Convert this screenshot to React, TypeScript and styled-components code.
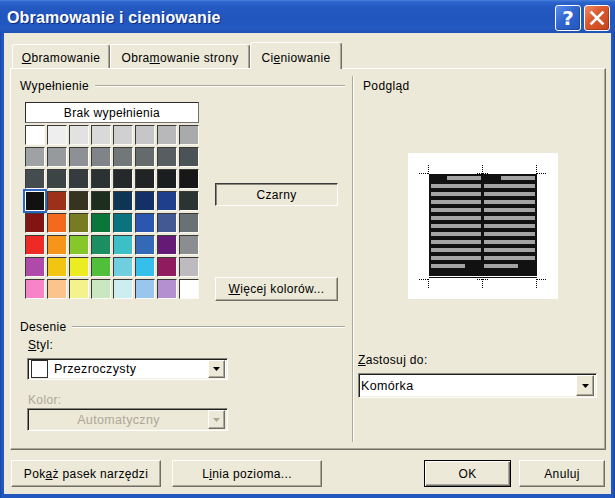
import React from "react";
import styled, { createGlobalStyle, css } from "styled-components";

const Global = createGlobalStyle`
  html, body { margin: 0; padding: 0; background: #fff; }
  body { font-family: "Liberation Sans", Arial, sans-serif; font-size: 12px; color: #000; }
  #root { width: 615px; height: 498px; }
  u { text-decoration: underline; text-underline-offset: 1px; }
`;

const raised = css`
  border: 1px solid;
  border-color: #fff #716f64 #716f64 #fff;
  box-shadow: inset -1px -1px #aca899;
  background: #ece9d8;
`;

const sunken = css`
  border: 1px solid;
  border-color: #8a887c #fff #fff #8a887c;
  box-shadow: inset 1px 1px #1e1e1e, inset -1px -1px #f1efe2;
`;

const Window = styled.div`
  width: 615px;
  height: 498px;
  box-sizing: border-box;
  display: flex;
  flex-direction: column;
  background: linear-gradient(90deg, #1a48a8 0, #2257bf 2px, #2257bf calc(100% - 2px), #163f98 100%);
`;

const TitleBar = styled.div`
  height: 33px;
  flex: none;
  box-sizing: border-box;
  display: flex;
  align-items: center;
  padding: 3px 5px 0 7px;
  background: linear-gradient(#4a80de 0, #2d64cc 2px, #2459c2 7px, #2156be 55%, #2459c2 85%, #1f50b4 100%);
`;

const TitleText = styled.div`
  flex: 1;
  color: #fff;
  font-weight: bold;
  font-size: 16px;
  letter-spacing: 0.15px;
  text-shadow: 1px 1px #0d2b7c;
`;

const TitleButtons = styled.div`
  display: flex;
  gap: 3px;
`;

const CaptionButton = styled.div<{ $kind: "help" | "close" }>`
  width: 26px;
  height: 26px;
  box-sizing: border-box;
  border: 1px solid #fff;
  border-radius: 3px;
  display: flex;
  align-items: center;
  justify-content: center;
  color: #fff;
  font-family: "DejaVu Sans", "Liberation Sans", sans-serif;
  font-weight: bold;
  font-size: 20px;
  background: ${(p) =>
    p.$kind === "help"
      ? "linear-gradient(135deg, #5b8de6 0%, #3166cf 45%, #2456c0 100%)"
      : "linear-gradient(135deg, #ec8a68 0%, #dc5a30 40%, #c8431c 100%)"};
  box-shadow: inset -1px -1px rgba(0, 0, 0, 0.2);
`;

const Client = styled.div`
  flex: 1;
  margin: 0 4px 4px 4px;
  background: #ece9d8;
  display: flex;
  flex-direction: column;
  padding: 9px 5px 0 6px;
  box-sizing: border-box;
  letter-spacing: 0.35px;
`;

const TabStrip = styled.div`
  height: 26px;
  display: flex;
  align-items: flex-end;
  padding-left: 2px;
  flex: none;
`;

const Tab = styled.div<{ $active?: boolean; $w: number }>`
  box-sizing: border-box;
  width: ${(p) => p.$w}px;
  height: ${(p) => (p.$active ? 27 : 24)}px;
  margin-bottom: ${(p) => (p.$active ? -1 : 0)}px;
  padding-top: 3px;
  display: flex;
  align-items: center;
  justify-content: center;
  background: #ece9d8;
  border: 1px solid;
  border-bottom: none;
  border-color: #fff #716f64 transparent #fff;
  box-shadow: inset -1px 0 #aca899;
  border-radius: 3px 3px 0 0;
  position: relative;
  z-index: ${(p) => (p.$active ? 2 : 1)};
  white-space: nowrap;
`;

const Panel = styled.div`
  height: 382px;
  box-sizing: border-box;
  display: flex;
  flex: none;
  border: 1px solid;
  border-color: #fff #716f64 #716f64 #fff;
  box-shadow: inset -1px -1px #aca899;
`;

const LeftCol = styled.div`
  width: 341px;
  padding-top: 10px;
  display: flex;
  flex-direction: column;
  box-sizing: border-box;
`;

const Separator = styled.div`
  width: 0;
  margin: 7px 0;
  border-left: 1px solid #aca899;
  border-right: 1px solid #fff;
`;

const RightCol = styled.div`
  flex: 1;
  padding: 10px 0 0 4px;
  display: flex;
  flex-direction: column;
  align-items: flex-start;
`;

const GroupHeader = styled.div<{ $mt?: number }>`
  display: flex;
  align-items: center;
  gap: 6px;
  height: 14px;
  line-height: 14px;
  padding: 0 7px 0 9px;
  margin-top: ${(p) => p.$mt ?? 0}px;
`;

const GroupLine = styled.div`
  flex: 1;
  border-top: 1px solid #aca899;
  border-bottom: 1px solid #fff;
`;

const FillArea = styled.div`
  display: flex;
  margin-top: 9px;
  padding-left: 14px;
`;

const FillColumn = styled.div`
  width: 176px;
  display: flex;
  flex-direction: column;
  gap: 2px;
`;

const NoFillButton = styled.div`
  width: 174px;
  height: 21px;
  box-sizing: border-box;
  border: 1px solid;
  border-color: #2b2b2b #6f6f6f #6f6f6f #2b2b2b;
  background: #fff;
  display: flex;
  align-items: center;
  justify-content: center;
`;

const ColorGrid = styled.div`
  display: grid;
  grid-template-columns: repeat(8, 22px);
  grid-auto-rows: 22px;
`;

const Swatch = styled.div<{ $c: string; $sel?: boolean }>`
  width: 20px;
  height: 20px;
  box-sizing: border-box;
  background: ${(p) => p.$c};
  border: 1px solid;
  border-color: #3a3a3a #fbfaf5 #fbfaf5 #3a3a3a;
  ${(p) =>
    p.$sel &&
    css`
      border-color: #fff;
      outline: 2px solid #2d66c4;
      outline-offset: 0;
    `}
`;

const SideColumn = styled.div`
  margin-left: 14px;
  width: 123px;
  padding-top: 81px;
  display: flex;
  flex-direction: column;
  justify-content: space-between;
`;

const ColorName = styled.div`
  height: 23px;
  box-sizing: border-box;
  border: 1px solid;
  border-color: #3a3a3a #fff #fff #3a3a3a;
  box-shadow: inset 1px 1px #8a887c;
  display: flex;
  align-items: center;
  justify-content: center;
`;

const PushButton = styled.div<{ $w?: number; $h: number; $default?: boolean }>`
  ${raised};
  ${(p) => (p.$w ? `width: ${p.$w}px;` : "")}
  height: ${(p) => p.$h}px;
  box-sizing: border-box;
  display: flex;
  align-items: center;
  justify-content: center;
  white-space: nowrap;
  ${(p) =>
    p.$default &&
    css`
      border-color: #000;
      box-shadow: inset 1px 1px #fff, inset -1px -1px #716f64, inset -2px -2px #aca899;
    `}
`;

const FieldLabel = styled.div<{ $mt: number; $ml: number; $disabled?: boolean }>`
  height: 14px;
  line-height: 14px;
  margin-top: ${(p) => p.$mt}px;
  margin-left: ${(p) => p.$ml}px;
  color: ${(p) => (p.$disabled ? "#aca899" : "#000")};
`;

const Combo = styled.div<{ $w: number; $h: number; $mt: number; $ml: number; $disabled?: boolean }>`
  ${sunken};
  width: ${(p) => p.$w}px;
  height: ${(p) => p.$h}px;
  margin-top: ${(p) => p.$mt}px;
  margin-left: ${(p) => p.$ml}px;
  box-sizing: border-box;
  padding: 1px 2px 1px 1px;
  display: flex;
  align-items: stretch;
  background: ${(p) => (p.$disabled ? "#ece9d8" : "#fff")};
  flex: none;
`;

const ComboSwatch = styled.div`
  width: 17px;
  height: 18px;
  box-sizing: border-box;
  margin: 0 0 0 2px;
  border: 1px solid #2b2b2b;
  background: #fff;
  align-self: center;
`;

const ComboText = styled.div<{ $disabled?: boolean; $center?: boolean; $pl: number }>`
  flex: 1;
  display: flex;
  align-items: center;
  padding-left: ${(p) => p.$pl}px;
  justify-content: ${(p) => (p.$center ? "center" : "flex-start")};
  color: ${(p) => (p.$disabled ? "#aca899" : "#000")};
  font-size: 12.5px;
`;

const ComboArrow = styled.div<{ $w: number }>`
  ${raised};
  width: ${(p) => p.$w}px;
  box-sizing: border-box;
  display: flex;
  align-items: center;
  justify-content: center;
`;

const PreviewLabel = styled.div`
  margin-left: 5px;
  height: 14px;
  line-height: 14px;
`;

const PreviewFrame = styled.div`
  margin: 60px 0 0 50px;
  width: 150px;
  height: 146px;
  line-height: 0;
`;

const ButtonRow = styled.div`
  display: flex;
  margin-top: 10px;
  padding: 0 1px;
  gap: 11px;
`;

const RightButtons = styled.div`
  margin-left: auto;
  display: flex;
  gap: 8px;
`;

const colorRows: string[][] = [
  ["#ffffff", "#eeeeee", "#e2e2e2", "#d9d9d9", "#d0d0d0", "#c6c6c8", "#b8b8ba", "#a9aaac"],
  ["#9fa2a5", "#979a9d", "#8d9094", "#808387", "#72777a", "#656a6d", "#575d60", "#4c5356"],
  ["#454c4f", "#3d4446", "#353b3e", "#2c3234", "#25292b", "#202425", "#1b1e1f", "#171717"],
  ["#111111", "#9c3018", "#36341e", "#1d2e1f", "#0f3554", "#143167", "#1f3e8c", "#2b3333"],
  ["#821414", "#f36a1d", "#777b22", "#0b7639", "#0b737d", "#2b57b1", "#425994", "#6a7175"],
  ["#ee2a27", "#f7951a", "#86c82b", "#1b8f62", "#3dbfc7", "#3469b7", "#651b76", "#8b8e91"],
  ["#b04aaa", "#f2c512", "#ecec22", "#50bf39", "#6fcedf", "#37bfec", "#901b5e", "#bdbbbf"],
  ["#f784c6", "#fbc48c", "#f3f28d", "#c9e8c1", "#cdeef0", "#98c6ec", "#b590d0", "#ffffff"],
];

const Arrow: React.FC<{ disabled?: boolean }> = ({ disabled }) => (
  <svg width="7" height="4" viewBox="0 0 7 4">
    <path d="M0 0H7L3.5 4Z" fill={disabled ? "#aca899" : "#000"} />
  </svg>
);

const PreviewDrawing: React.FC = () => {
  const full = [31, 39, 47, 55, 63, 71, 79, 87, 95, 103];
  const bar = "#a3a3a3";
  const dot = { stroke: "#000", strokeWidth: 1, strokeDasharray: "1 1" } as const;
  const xs = [20.5, 74.5, 128.5];
  return (
    <svg width="150" height="146" viewBox="0 0 150 146">
      <rect width="150" height="146" fill="#fff" />
      <rect x="21" y="21" width="108" height="102" fill="#111" />
      <rect x="21" y="124" width="108" height="1" fill="#111" />
      <rect x="39" y="23" width="34" height="4" fill={bar} />
      <rect x="93" y="23" width="34" height="4" fill={bar} />
      {full.map((y) => (
        <React.Fragment key={y}>
          <rect x="23" y={y} width="50" height="4" fill={bar} />
          <rect x="76" y={y} width="51" height="4" fill={bar} />
        </React.Fragment>
      ))}
      <rect x="23" y="111" width="34" height="4" fill={bar} />
      <rect x="76" y="111" width="34" height="4" fill={bar} />
      <line x1="11" x2="21" y1="20.5" y2="20.5" {...dot} />
      <line x1="69" x2="80" y1="20.5" y2="20.5" {...dot} />
      <line x1="129" x2="139" y1="20.5" y2="20.5" {...dot} />
      <line x1="11" x2="21" y1="126.5" y2="126.5" {...dot} />
      <line x1="69" x2="80" y1="126.5" y2="126.5" {...dot} />
      <line x1="129" x2="139" y1="126.5" y2="126.5" {...dot} />
      {xs.map((x) => (
        <React.Fragment key={x}>
          <line x1={x} x2={x} y1="12" y2="21" {...dot} />
          <line x1={x} x2={x} y1="126" y2="135" {...dot} />
        </React.Fragment>
      ))}
    </svg>
  );
};

export default function App() {
  return (
    <>
      <Global />
      <Window>
        <TitleBar>
          <TitleText>Obramowanie i cieniowanie</TitleText>
          <TitleButtons>
            <CaptionButton $kind="help">?</CaptionButton>
            <CaptionButton $kind="close">
              <svg width="16" height="16" viewBox="0 0 16 16">
                <path d="M2.5 2.5L13.5 13.5M13.5 2.5L2.5 13.5" stroke="#fff" strokeWidth="2.6" strokeLinecap="square" />
              </svg>
            </CaptionButton>
          </TitleButtons>
        </TitleBar>
        <Client>
          <TabStrip>
            <Tab $w={98}>
              <span>
                <u>O</u>bramowanie
              </span>
            </Tab>
            <Tab $w={140}>
              <span>
                Obra<u>m</u>owanie strony
              </span>
            </Tab>
            <Tab $w={92} $active>
              <span>
                Ci<u>e</u>niowanie
              </span>
            </Tab>
          </TabStrip>
          <Panel>
            <LeftCol>
              <GroupHeader>
                <span>Wypełnienie</span>
                <GroupLine />
              </GroupHeader>
              <FillArea>
                <FillColumn>
                  <NoFillButton>Brak wypełnienia</NoFillButton>
                  <ColorGrid>
                    {colorRows.map((row, r) =>
                      row.map((c, i) => <Swatch key={`${r}-${i}`} $c={c} $sel={r === 3 && i === 0} />)
                    )}
                  </ColorGrid>
                </FillColumn>
                <SideColumn>
                  <ColorName>Czarny</ColorName>
                  <PushButton $h={24}>
                    <span>
                      <u>W</u>ięcej kolorów...
                    </span>
                  </PushButton>
                </SideColumn>
              </FillArea>
              <GroupHeader $mt={19}>
                <span>Desenie</span>
                <GroupLine />
              </GroupHeader>
              <FieldLabel $mt={4} $ml={17}>
                <u>S</u>tyl:
              </FieldLabel>
              <Combo $w={201} $h={22} $mt={6} $ml={16}>
                <ComboSwatch />
                <ComboText $pl={6}>Przezroczysty</ComboText>
                <ComboArrow $w={17}>
                  <Arrow />
                </ComboArrow>
              </Combo>
              <FieldLabel $mt={13} $ml={17} $disabled>
                Kolor:
              </FieldLabel>
              <Combo $w={201} $h={23} $mt={1} $ml={16} $disabled>
                <ComboText $pl={0} $center $disabled>
                  Automatyczny
                </ComboText>
                <ComboArrow $w={17}>
                  <Arrow disabled />
                </ComboArrow>
              </Combo>
            </LeftCol>
            <Separator />
            <RightCol>
              <PreviewLabel>Podgląd</PreviewLabel>
              <PreviewFrame>
                <PreviewDrawing />
              </PreviewFrame>
              <FieldLabel $mt={54} $ml={0}>
                <u>Z</u>astosuj do:
              </FieldLabel>
              <Combo $w={239} $h={25} $mt={6} $ml={0}>
                <ComboText $pl={1}>Komórka</ComboText>
                <ComboArrow $w={18}>
                  <Arrow />
                </ComboArrow>
              </Combo>
            </RightCol>
          </Panel>
          <ButtonRow>
            <PushButton $w={150} $h={27}>
              <span>
                Pok<u>a</u>ż pasek narzędzi
              </span>
            </PushButton>
            <PushButton $w={150} $h={27}>
              <span>
                L<u>i</u>nia pozioma...
              </span>
            </PushButton>
            <RightButtons>
              <PushButton $w={87} $h={27} $default>
                OK
              </PushButton>
              <PushButton $w={86} $h={27}>
                Anuluj
              </PushButton>
            </RightButtons>
          </ButtonRow>
        </Client>
      </Window>
    </>
  );
}
